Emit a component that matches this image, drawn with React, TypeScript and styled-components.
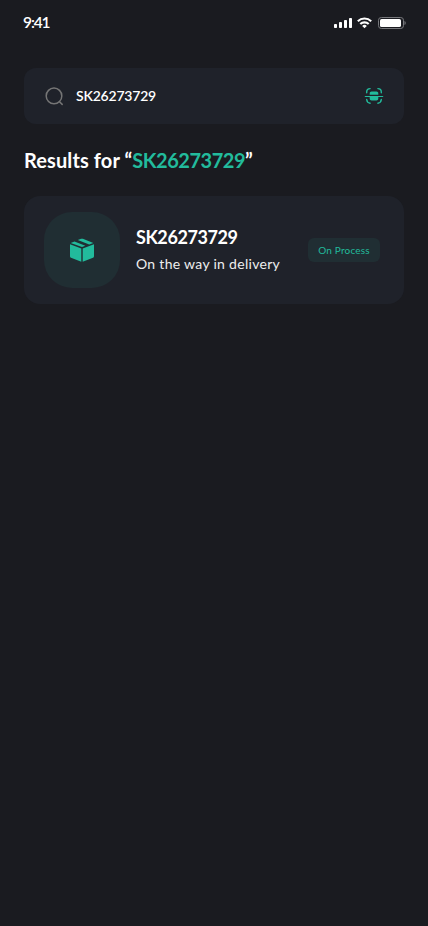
import React from "react";
import styled, { createGlobalStyle } from "styled-components";

const GlobalStyle = createGlobalStyle`
  * { box-sizing: border-box; }
  body { margin: 0; background: #1a1b20; }
`;

const Screen = styled.div`
  min-height: 926px;
  background: #1a1b20;
  color: #fff;
  font-family: Lato, "Open Sans", sans-serif;
`;

const StatusBar = styled.header`
  display: flex;
  align-items: center;
  justify-content: space-between;
  height: 44px;
  padding: 1px 22px 0 23px;
`;

const Time = styled.span`
  margin-top: -2px;
  font-size: 15.500px;
  line-height: 20px;
  font-weight: 600;
  letter-spacing: -1.1px;
`;

const StatusIcons = styled.svg`
  display: block;
  width: 72px;
  height: 14px;
`;

const Content = styled.main`
  display: flex;
  flex-direction: column;
  padding: 24px 24px 0;
`;

const SearchField = styled.div`
  display: flex;
  align-items: center;
  height: 56px;
  padding: 0 20px;
  border-radius: 12px;
  background: #1f222a;
`;

const Query = styled.span`
  flex: 1;
  margin-left: 12px;
  font-size: 14px;
  line-height: 20px;
  font-weight: 600;
  letter-spacing: -0.2px;
`;

const Icon = styled.svg<{ $size: number }>`
  display: block;
  flex: none;
  width: ${(p) => p.$size}px;
  height: ${(p) => p.$size}px;
`;

const Heading = styled.h1`
  margin: 24px 0;
  font-size: 20px;
  line-height: 24px;
  font-weight: 700;
  white-space: nowrap;
  letter-spacing: 0.1px;
`;

const Code = styled.span`
  color: #22bb9c;
  letter-spacing: -0.48px;
`;

const ResultCard = styled.article`
  display: flex;
  align-items: center;
  height: 108px;
  padding: 0 24px 0 20px;
  border-radius: 16px;
  background: #1f222a;
`;

const Thumb = styled.div`
  display: flex;
  align-items: center;
  justify-content: center;
  width: 76px;
  height: 76px;
  border-radius: 28px;
  background: #202e33;
`;

const Details = styled.div`
  flex: 1;
  margin-left: 16px;
`;

const Title = styled.h2`
  margin: -1px 0 6px;
  font-size: 18px;
  line-height: 22px;
  font-weight: 700;
  letter-spacing: -0.42px;
`;

const Description = styled.p`
  margin: 0;
  font-size: 14px;
  line-height: 20px;
  color: #eeeeee;
  white-space: nowrap;
  letter-spacing: 0.3px;
`;

const Badge = styled.span`
  display: flex;
  align-items: center;
  justify-content: center;
  width: 72px;
  height: 24px;
  border-radius: 6px;
  background: #202e33;
  color: #22bb9c;
  font-size: 10px;
  line-height: 12px;
  white-space: nowrap;
  letter-spacing: 0.2px;
`;

export default function App() {
  return (
    <Screen>
      <GlobalStyle />
      <StatusBar>
        <Time>9:41</Time>
        <StatusIcons viewBox="0 0 72 14" fill="#fff" aria-hidden="true">
          <rect x="0" y="8" width="3" height="4" rx="0.8" />
          <rect x="5" y="6" width="3" height="6" rx="0.8" />
          <rect x="10" y="4" width="3" height="8" rx="0.8" />
          <rect x="15" y="2" width="3" height="10" rx="0.8" />
          <g fill="none" stroke="#fff" strokeWidth="2.1">
            <path d="M23.8 5.2a9.7 9.7 0 0 1 13.4 0" />
            <path d="M26.3 8.1a6 6 0 0 1 8.4 0" />
          </g>
          <path d="M30.5 12.3l-2.3-2.4a3.3 3.3 0 0 1 4.6 0z" />
          <rect x="44.5" y="1.5" width="25" height="11" rx="2.8" fill="none" stroke="#77787c" />
          <rect x="46" y="3" width="21" height="8" rx="1.6" />
          <path d="M70.500 5v4c.8-.3 1.200-1.1 1.200-2S71.300 5.300 70.500 5z" fill="#77787c" />
        </StatusIcons>
      </StatusBar>
      <Content>
        <SearchField>
          <Icon $size={20} viewBox="0 0 20 20" fill="none" stroke="#757575" strokeWidth="1.5" strokeLinecap="round" aria-hidden="true">
            <circle cx="10" cy="9.900" r="7.800" />
            <path d="M15.500 15.800l2.700 2.600" />
          </Icon>
          <Query>SK26273729</Query>
          <Icon $size={20} viewBox="0 0 20 20" fill="none" stroke="#22bb9c" strokeWidth="1.4" strokeLinecap="round" aria-hidden="true">
            <path d="M2.700 6.700V6a3.400 3.400 0 0 1 3.400-3.400M13.900 2.600A3.400 3.400 0 0 1 17.300 6v.7M17.300 13.500a4 4 0 0 1-3.400 3.700M6.100 17.200a4 4 0 0 1-3.400-3.700" />
            <path d="M1.300 10.500h17.400" strokeWidth="1.2" />
            <path d="M5.700 8.800V7.500c0-1.200.8-1.900 1.900-1.900h4.800c1.100 0 1.900.7 1.900 1.900v1.300zM5.700 11v1.400c0 1.200.8 2 1.900 2h4.800c1.100 0 1.900-.8 1.900-2V11z" fill="#22bb9c" stroke="none" />
          </Icon>
        </SearchField>
        <Heading>
          Results for “<Code>SK26273729</Code>”
        </Heading>
        <ResultCard>
          <Thumb>
            <Icon $size={28} viewBox="0 0 28 28" fill="#22bb9c" aria-hidden="true">
              <path d="M2 8.300l11.300 4.100v13.300L3 21.700a1.500 1.500 0 0 1-1-1.400z" />
              <path d="M26 8.300l-11.300 4.100v13.300L25 21.700a1.500 1.500 0 0 0 1-1.400z" />
              <path d="M2.700 6.900l3.800-1.500 10.900 4.300L14 11z" />
              <path d="M9.800 4.100l3.300-1.300c.6-.2 1.200-.2 1.800 0l10.400 4.100-4.100 1.500z" />
            </Icon>
          </Thumb>
          <Details>
            <Title>SK26273729</Title>
            <Description>On the way in delivery</Description>
          </Details>
          <Badge>On Process</Badge>
        </ResultCard>
      </Content>
    </Screen>
  );
}
